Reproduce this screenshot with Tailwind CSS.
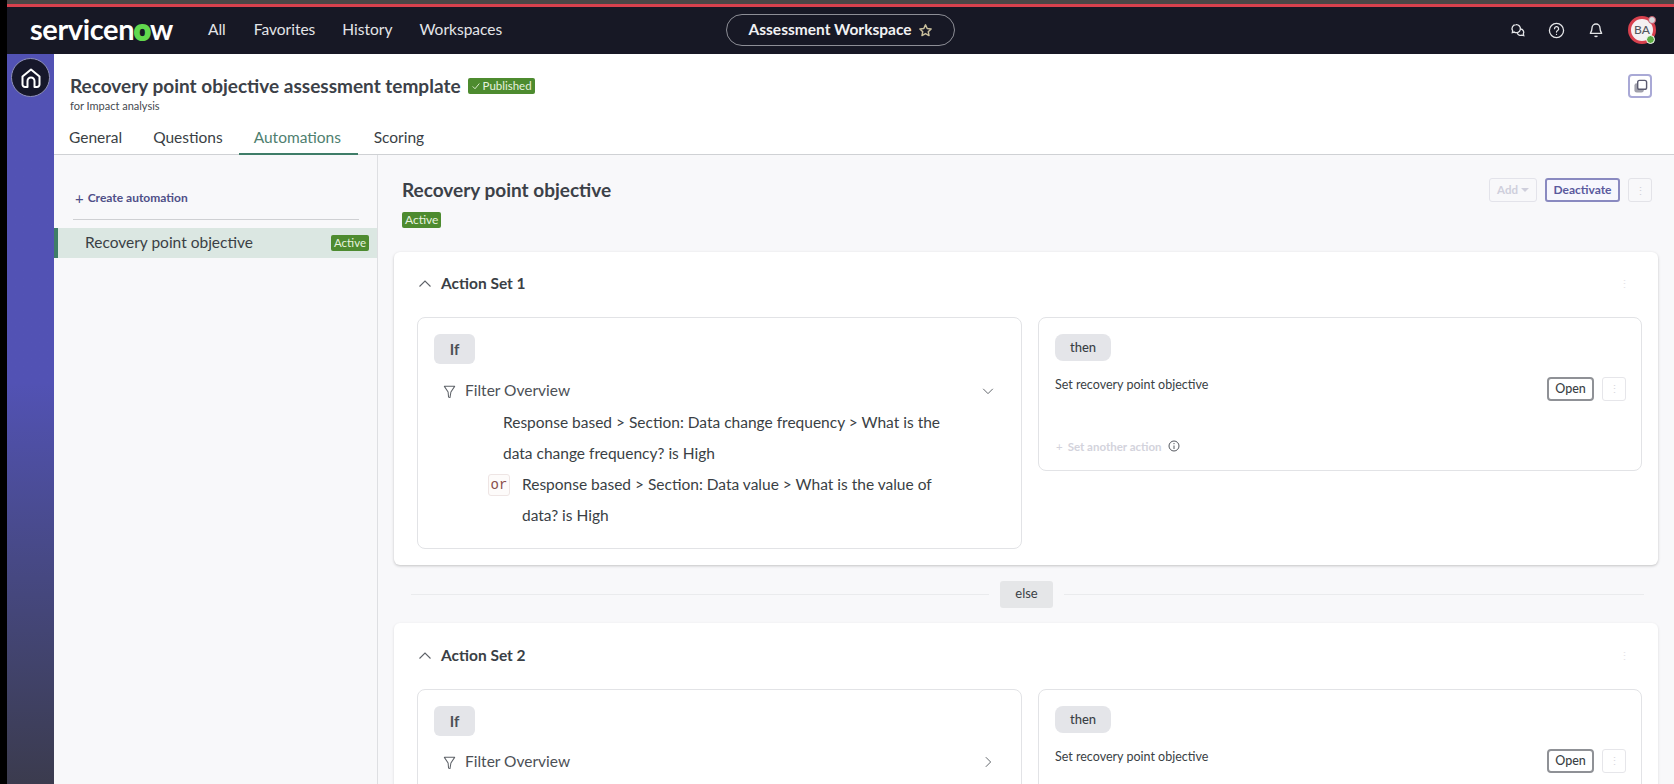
<!DOCTYPE html>
<html lang="en">
<head>
  <meta charset="UTF-8">
  <title>Assessment Workspace</title>
  <script src="https://cdn.jsdelivr.net/npm/@tailwindcss/browser@4"></script>
</head>
<body class="bg-black overflow-hidden font-['Lato',sans-serif] text-[#3a3f45]">
  <div class="flex w-[1674px] h-[784px] overflow-hidden">
    <div class="w-[7px] shrink-0 bg-black"></div>
    <div class="flex-1 flex flex-col min-w-0">
      <div class="h-[4px] bg-[#4b4646]"></div>
      <div class="h-[3px] bg-[#d8414e]"></div>

      <!-- top nav -->
      <nav class="h-[47px] shrink-0 bg-[#171825] relative flex items-center text-[#e4e5e8]">
        <div class="ml-[23px] w-[145px] text-[29px] leading-none font-bold tracking-[-0.4px] text-white pb-[5px] whitespace-nowrap">servicen<span class="text-[#62d84e] [-webkit-text-stroke:2px_#62d84e]">o</span>w</div>
        <a class="ml-[33px] text-[15.5px] pb-[2px]">All</a>
        <a class="ml-[28px] text-[15.5px] pb-[2px]">Favorites</a>
        <a class="ml-[27px] text-[15.5px] pb-[2px]">History</a>
        <a class="ml-[27px] text-[15.5px] pb-[2px]">Workspaces</a>
        <div class="absolute left-[719px] top-[7px] w-[229px] h-[32px] rounded-full border border-[#8d8e96] flex items-center justify-center gap-[6px] font-bold text-[15.5px] text-[#f1f1f3]">
          Assessment Workspace
          <svg class="w-[15px] h-[15px]" viewBox="0 0 24 24" fill="none" stroke="#c9bf9c" stroke-width="2.4" stroke-linejoin="round"><path d="M12 3l2.7 5.8 6.3.8-4.6 4.3 1.2 6.2L12 17l-5.6 3.1 1.2-6.2L3 9.6l6.3-.8z"/></svg>
        </div>
        <div class="ml-auto flex items-center pb-[1px]">
          <svg class="w-[16px] h-[16px]" viewBox="0 0 24 24" fill="none" stroke="#e4e5e8" stroke-width="2"><path d="M9 4a6 6 0 0 0-5 9.3L3.5 16l3-.9A6 6 0 1 0 9 4z"/><path d="M15.5 10.5a5 5 0 0 1 4.5 7.4l.6 2.600-2.800-.8a5 5 0 0 1-6.800-3"/></svg>
          <svg class="ml-[22px] w-[17px] h-[17px]" viewBox="0 0 24 24" fill="none" stroke="#e4e5e8" stroke-width="1.8" stroke-linecap="round"><circle cx="12" cy="12" r="10"/><path d="M9.2 9.5a2.900 2.900 0 1 1 4.400 2.400c-1 .6-1.600 1.100-1.600 2.300"/><path d="M12 17.5v.1"/></svg>
          <svg class="ml-[23px] w-[16px] h-[16px]" viewBox="0 0 24 24" fill="none" stroke="#e4e5e8" stroke-width="2" stroke-linejoin="round"><path d="M12 3a6 6 0 0 0-6 6c0 5-2.500 7.500-2.500 8h17c0-.5-2.500-3-2.500-8a6 6 0 0 0-6-6z"/><path d="M10 20.5a2.200 2.200 0 0 0 4 0"/></svg>
          <div class="relative ml-[24px] mr-[18px] w-[28px] h-[28px] rounded-full bg-[#f4f1f2] border-[3px] border-[#d8414e] flex items-center justify-center text-[12px] font-medium text-[#55585f]">
            BA
            <span class="absolute -top-[3px] -right-[3px] w-[8px] h-[8px] rounded-full bg-[#d9d9dd] border border-[#c9596a]"></span>
            <span class="absolute -bottom-[3px] -right-[2px] w-[9px] h-[9px] rounded-full bg-[#5fae45] border border-white"></span>
          </div>
        </div>
      </nav>

      <div class="flex-1 flex min-h-0">
        <!-- rail -->
        <div class="w-[47px] shrink-0 bg-linear-to-b from-[#5252b4] from-[45%] to-[#3b3b4e] pt-[4px] pl-[4px]">
          <div class="w-[39px] h-[39px] rounded-full bg-[#16172a] border border-[#8f90b8] flex items-center justify-center">
            <svg class="w-[24px] h-[24px]" viewBox="0 0 24 24" fill="none" stroke="#fff" stroke-width="2" stroke-linejoin="round"><path d="M3.5 10.5L12 3.5l8.500 7v8a2.500 2.500 0 0 1-2.500 2.500h-2.500v-6a3.500 3.500 0 0 0-7 0v6H6a2.500 2.500 0 0 1-2.500-2.500z"/></svg>
          </div>
        </div>

        <div class="flex-1 flex flex-col min-w-0 bg-white">
          <!-- record header -->
          <header class="h-[101px] shrink-0 border-b border-[#cfd1d4] relative pl-[16px]">
            <div class="flex items-center pt-[20px] h-[44px]">
              <h1 class="text-[19px] leading-[24px] font-bold text-[#3c4148] whitespace-nowrap">Recovery point objective assessment template</h1>
              <span class="ml-[7px] h-[16px] px-[3px] rounded-[2px] bg-[#4d8b2f] text-[#e7f2df] text-[11.5px] leading-[16px] flex items-center gap-[2px]">
                <svg class="w-[10px] h-[10px]" viewBox="0 0 12 12" fill="none" stroke="#d5e8c8" stroke-width="1.2"><path d="M2 6.5l2.800 2.800L10 3"/></svg>
                Published
              </span>
            </div>
            <div class="text-[11px] leading-[14px] mt-[1px] text-[#454a50]">for Impact analysis</div>
            <div class="absolute left-[15px] bottom-[-1px] flex text-[15.5px] h-[35px]">
              <a class="pt-[6px] pr-[31px]">General</a>
              <a class="pt-[6px] pr-[31px]">Questions</a>
              <a class="pt-[6px] w-[119px] -ml-[15px] pl-[15px] text-[#4f7f70] border-b-[2px] border-[#3f7d68]">Automations</a>
              <a class="pt-[6px] ml-[16px]">Scoring</a>
            </div>
            <div class="absolute right-[22px] top-[20px] w-[24px] h-[24px] rounded-[4px] border-2 border-[#a9a9d6] flex items-center justify-center">
              <svg class="w-[15px] h-[15px]" viewBox="0 0 16 16"><rect x="1.5" y="4.5" width="10" height="10" rx="2.5" fill="#a0a0ab"/><rect x="5" y="1.5" width="9.5" height="9.5" rx="2" fill="#fff" stroke="#5b5b70" stroke-width="1.5"/></svg>
            </div>
          </header>

          <div class="flex-1 flex min-h-0 bg-[#f8f8fa]">
            <!-- automations list -->
            <aside class="w-[324px] shrink-0 border-r border-[#dedfe2] pt-[35px]">
              <div class="ml-[21px] flex items-center gap-[4px] h-[16px] text-[12px] font-bold text-[#4f4f88]">
                <span class="text-[15px] font-normal leading-none">+</span>Create automation
              </div>
              <div class="ml-[19px] mr-[18px] mt-[13px] border-t border-[#cfd0d3]"></div>
              <div class="mt-[8px] h-[30px] bg-[#dbe7e2] border-l-[4px] border-[#3f7d68] flex items-center justify-between pl-[27px] pr-[8px]">
                <span class="text-[15.5px]">Recovery point objective</span>
                <span class="h-[16px] px-[3px] rounded-[2px] bg-[#4d8b2f] text-[#e7f2df] text-[11.5px] leading-[16px]">Active</span>
              </div>
            </aside>

            <!-- detail -->
            <main class="flex-1 min-w-0 overflow-hidden relative pl-[16px] pr-[16px] pt-[23px]">
              <div class="flex justify-between pl-[8px]">
                <div>
                  <h2 class="text-[19px] leading-[24px] font-bold text-[#3c4148]">Recovery point objective</h2>
                  <span class="inline-block mt-[10px] h-[16px] px-[3px] rounded-[2px] bg-[#4d8b2f] text-[#e7f2df] text-[12px] leading-[16px] align-top">Active</span>
                </div>
                <div class="flex gap-[8px] h-[24px] mr-[6px]">
                  <div class="w-[48px] rounded-[3px] border border-[#e3e3ea] flex items-center justify-center gap-[3px] text-[11.5px] font-bold text-[#cfcfdc]">Add <span class="w-0 h-0 border-x-[4px] border-x-transparent border-t-[4px] border-t-[#cfcfdc]"></span></div>
                  <div class="w-[75px] rounded-[3px] border-2 border-[#8a8ac0] bg-[#f7f7fd] flex items-center justify-center text-[12px] font-bold text-[#5a5a9e]">Deactivate</div>
                  <div class="w-[24px] rounded-[3px] border border-[#e3e3e8] flex items-center justify-center text-[11px] leading-none text-[#d0d0d8]">⋮</div>
                </div>
              </div>

              <!-- action set 1 -->
              <section class="mt-[24px] h-[313px] bg-white rounded-[6px] shadow-[0_1px_3px_rgba(0,0,0,0.22)] pt-[20px] pl-[23px] pr-[16px]">
                <div class="relative flex items-center h-[24px] gap-[8px]">
                  <svg class="w-[16px] h-[16px]" viewBox="0 0 16 16" fill="none" stroke="#5d6167" stroke-width="1.1"><path d="M2.5 10.5L8 5l5.500 5.500"/></svg>
                  <span class="text-[15.5px] font-bold">Action Set 1</span>
                  <span class="absolute right-[12px] text-[11px] text-[#e3e3e6]">⋮</span>
                </div>
                <div class="flex gap-[16px] mt-[21px] items-start">
                  <div class="w-[605px] shrink-0 h-[232px] rounded-[8px] border border-[#e2e3e6] pt-[16px] pl-[16px] pr-[26px]">
                    <div class="w-[41px] h-[30px] rounded-[6px] bg-[#e4e5e9] flex items-center justify-center text-[15px] font-bold text-[#4c5056]">If</div>
                    <div class="flex items-center mt-[17px] h-[20px] pl-[8px]">
                      <svg class="w-[15px] h-[15px]" viewBox="0 0 16 16" fill="none" stroke="#5d6167" stroke-width="1.1" stroke-linejoin="round"><path d="M2.5 2.5h11L9.500 8.500 8.500 14.500 7 14 6.500 8.500z"/></svg>
                      <span class="ml-[7px] text-[15.5px] text-[#4c5056] pl-[1px]">Filter Overview</span>
                      <svg class="ml-auto w-[14px] h-[14px]" viewBox="0 0 16 16" fill="none" stroke="#5d6167" stroke-width="1.1"><path d="M2.5 5.5L8 11l5.500-5.500"/></svg>
                    </div>
                    <div class="ml-[69px] mt-[6px] text-[15.5px] leading-[31px] w-[460px]">Response based &gt; Section: Data change frequency &gt; What is the data change frequency? is High</div>
                    <div class="flex ml-[54px]">
                      <span class="mt-[5px] w-[22px] h-[22px] rounded-[3px] border border-[#eee5e4] bg-[#fdfbfa] font-['Liberation_Mono',monospace] text-[14px] leading-[20px] text-center text-[#8a4f4a]">or</span>
                      <div class="ml-[12px] text-[15.5px] leading-[31px] w-[430px]">Response based &gt; Section: Data value &gt; What is the value of data? is High</div>
                    </div>
                  </div>
                  <div class="w-[604px] shrink-0 h-[154px] rounded-[8px] border border-[#e2e3e6] pt-[16px] pl-[16px] pr-[15px] relative">
                    <div class="w-[56px] h-[27px] rounded-[8px] bg-[#e4e5e9] flex items-center justify-center text-[13px] font-medium">then</div>
                    <div class="flex justify-between mt-[15px]">
                      <span class="text-[12.5px] leading-[18px]">Set recovery point objective</span>
                      <div class="flex gap-[8px] mt-[1px]">
                        <div class="w-[47px] h-[24px] rounded-[4px] border-2 border-[#8f9196] flex items-center justify-center text-[12.5px] font-medium">Open</div>
                        <div class="w-[24px] h-[24px] rounded-[3px] border border-[#e6e6ea] flex items-center justify-center text-[11px] text-[#d8d8de]">⋮</div>
                      </div>
                    </div>
                    <div class="absolute left-[17px] bottom-[15px] flex items-center text-[11.5px] font-bold text-[#d3d3dc]">
                      <span class="mr-[5px] font-normal">+</span>Set another action
                      <svg class="ml-[6px] w-[12px] h-[12px]" viewBox="0 0 12 12" fill="none" stroke="#55585f"><circle cx="6" cy="6" r="5"/><path d="M6 5.5V9M6 3v1.2"/></svg>
                    </div>
                  </div>
                </div>
              </section>

              <!-- else -->
              <div class="flex items-center h-[58px] pl-[17px] pr-[14px]">
                <div class="flex-1 border-t border-[#eaebed]"></div>
                <div class="mx-[11px] w-[53px] h-[27px] rounded-[3px] bg-[#e5e6e8] flex items-center justify-center text-[13px]">else</div>
                <div class="w-[580px] border-t border-[#eaebed]"></div>
              </div>

              <!-- action set 2 -->
              <section class="h-[200px] bg-white rounded-[6px] shadow-[0_1px_3px_rgba(0,0,0,0.12)] pt-[21px] pl-[23px] pr-[16px]">
                <div class="relative flex items-center h-[24px] gap-[8px]">
                  <svg class="w-[16px] h-[16px]" viewBox="0 0 16 16" fill="none" stroke="#5d6167" stroke-width="1.1"><path d="M2.5 10.5L8 5l5.500 5.500"/></svg>
                  <span class="text-[15.5px] font-bold">Action Set 2</span>
                  <span class="absolute right-[12px] text-[11px] text-[#e3e3e6]">⋮</span>
                </div>
                <div class="flex gap-[16px] mt-[21px] items-start">
                  <div class="w-[605px] shrink-0 h-[232px] rounded-[8px] border border-[#e2e3e6] pt-[16px] pl-[16px] pr-[26px]">
                    <div class="w-[41px] h-[30px] rounded-[6px] bg-[#e4e5e9] flex items-center justify-center text-[15px] font-bold text-[#4c5056]">If</div>
                    <div class="flex items-center mt-[16px] h-[20px] pl-[8px]">
                      <svg class="w-[15px] h-[15px]" viewBox="0 0 16 16" fill="none" stroke="#5d6167" stroke-width="1.1" stroke-linejoin="round"><path d="M2.5 2.5h11L9.500 8.500 8.500 14.500 7 14 6.500 8.500z"/></svg>
                      <span class="ml-[7px] text-[15.5px] text-[#4c5056] pl-[1px]">Filter Overview</span>
                      <svg class="ml-auto w-[14px] h-[14px]" viewBox="0 0 16 16" fill="none" stroke="#5d6167" stroke-width="1.1"><path d="M5.5 2.5L11 8l-5.500 5.500"/></svg>
                    </div>
                  </div>
                  <div class="w-[604px] shrink-0 h-[154px] rounded-[8px] border border-[#e2e3e6] pt-[16px] pl-[16px] pr-[15px]">
                    <div class="w-[56px] h-[27px] rounded-[8px] bg-[#e4e5e9] flex items-center justify-center text-[13px] font-medium">then</div>
                    <div class="flex justify-between mt-[15px]">
                      <span class="text-[12.5px] leading-[18px]">Set recovery point objective</span>
                      <div class="flex gap-[8px] mt-[1px]">
                        <div class="w-[47px] h-[24px] rounded-[4px] border-2 border-[#8f9196] flex items-center justify-center text-[12.5px] font-medium">Open</div>
                        <div class="w-[24px] h-[24px] rounded-[3px] border border-[#e6e6ea] flex items-center justify-center text-[11px] text-[#d8d8de]">⋮</div>
                      </div>
                    </div>
                  </div>
                </div>
              </section>
            </main>
          </div>
        </div>
      </div>
    </div>
  </div>
</body>
</html>
